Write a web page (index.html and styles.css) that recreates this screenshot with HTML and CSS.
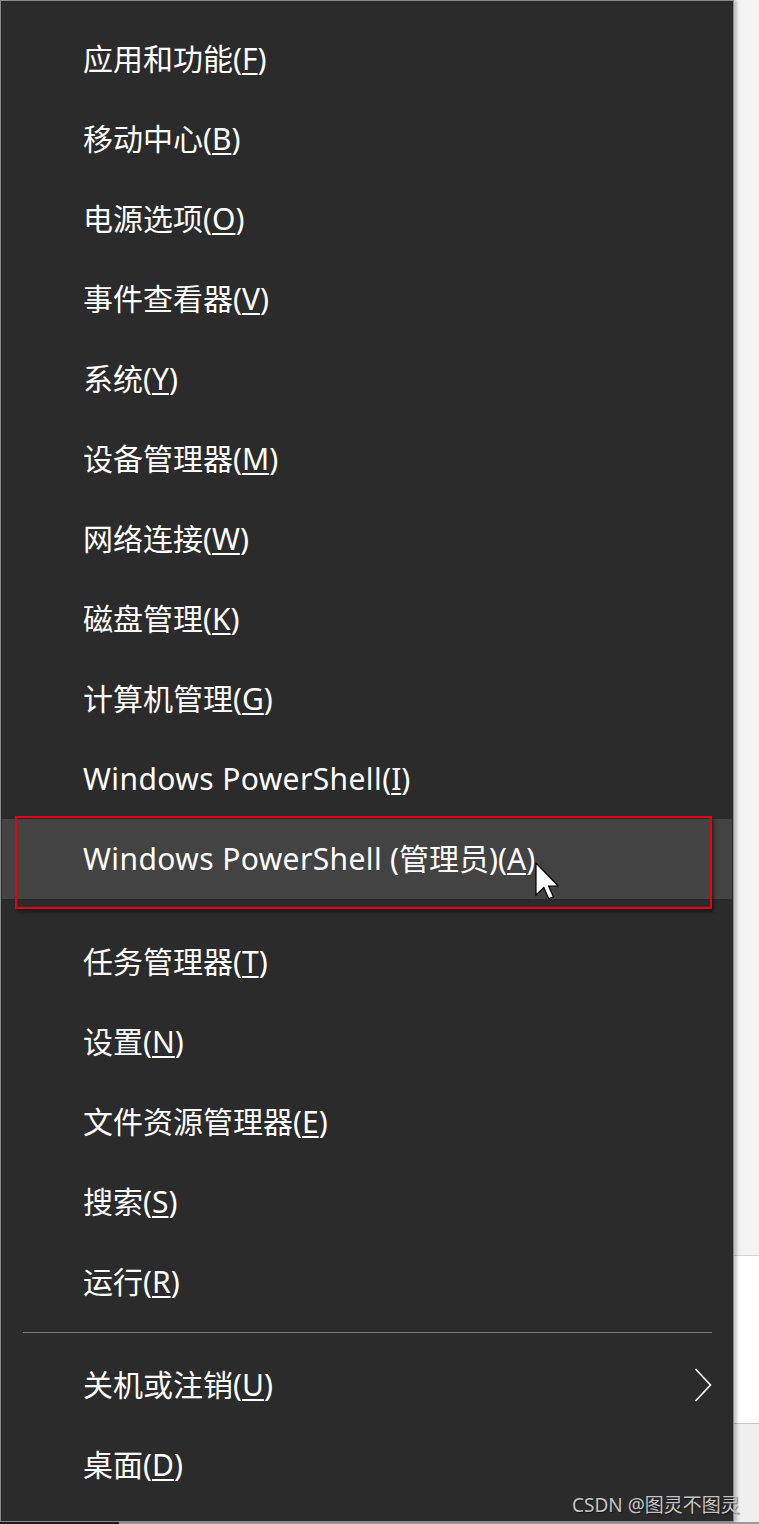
FILE: index.html
```html
<!DOCTYPE html>
<html lang="zh-CN">
<head>
<meta charset="utf-8">
<title>Win+X 菜单</title>
<link rel="stylesheet" href="styles.css">
</head>
<body>
<div class="desk">
  <div class="menu">
    <div class="item"><span class="label">应用和功能(<u>F</u>)</span></div>
    <div class="item"><span class="label">移动中心(<u>B</u>)</span></div>
    <div class="item"><span class="label">电源选项(<u>O</u>)</span></div>
    <div class="item"><span class="label">事件查看器(<u>V</u>)</span></div>
    <div class="item"><span class="label">系统(<u>Y</u>)</span></div>
    <div class="item"><span class="label">设备管理器(<u>M</u>)</span></div>
    <div class="item"><span class="label">网络连接(<u>W</u>)</span></div>
    <div class="item"><span class="label">磁盘管理(<u>K</u>)</span></div>
    <div class="item"><span class="label">计算机管理(<u>G</u>)</span></div>
    <div class="item"><span class="label"><span class="lat">Windows PowerShell</span>(<u>I</u>)</span></div>
    <div class="item hover">
      <span class="label"><span class="lat">Windows PowerShell</span> (管理员)(<u>A</u>)</span>
      <div class="mark"></div>
      <svg class="cursor" width="24" height="38" viewBox="0 0 12 19">
        <path d="M0.5 0.5 L0.5 16.5 L4.4 12.8 L6.9 18.4 L9.2 17.4 L6.8 12 L11.6 12 Z" fill="#fff" stroke="#000" stroke-width="0.6" stroke-linejoin="miter"/>
      </svg>
    </div>
    <div class="gap"></div>
    <div class="item"><span class="label">任务管理器(<u>T</u>)</span></div>
    <div class="item"><span class="label">设置(<u>N</u>)</span></div>
    <div class="item"><span class="label">文件资源管理器(<u>E</u>)</span></div>
    <div class="item"><span class="label">搜索(<u>S</u>)</span></div>
    <div class="item"><span class="label">运行(<u>R</u>)</span></div>
    <div class="sep"></div>
    <div class="item">
      <span class="label">关机或注销(<u>U</u>)</span>
      <svg class="chev" width="18" height="34" viewBox="0 0 18 34">
        <polyline points="1.5,1 16.5,17 1.5,33" fill="none" stroke="#fff" stroke-width="1.6"/>
      </svg>
    </div>
    <div class="item"><span class="label">桌面(<u>D</u>)</span></div>
  </div>
  <div class="side">
    <div class="side-top"></div>
    <div class="side-panel"></div>
    <div class="side-bottom"></div>
  </div>
</div>
<div class="strip">
  <div class="strip-dark"></div>
  <div class="strip-light"></div>
</div>
<div class="watermark">CSDN @图灵不图灵</div>
</body>
</html>
```
FILE: styles.css
```css
* { box-sizing: border-box; }

html, body {
  margin: 0;
  padding: 0;
}

body {
  width: 759px;
  height: 1524px;
  background: #f3f3f3;
  position: relative;
  overflow: hidden;
  font-family: "Noto Sans", "Noto Sans CJK SC", sans-serif;
}

.desk {
  display: flex;
  height: 1522px;
}

.menu {
  width: 734px;
  height: 1522px;
  flex: none;
  background: #2b2b2b;
  border: 1px solid #8a8a8a;
  padding-top: 18px;
  display: flex;
  flex-direction: column;
  position: relative;
  z-index: 1;
  box-shadow: 3px 0 3px rgba(0, 0, 0, 0.22);
}

.item {
  height: 80px;
  flex: none;
  display: flex;
  align-items: center;
  justify-content: space-between;
  padding: 0 21px 0 82px;
  color: #ffffff;
  font-size: 30px;
  line-height: 40px;
  white-space: nowrap;
}

.label {
  display: block;
}

.lat {
  letter-spacing: 0.4px;
}

.item u {
  text-decoration: underline;
  text-decoration-thickness: 1.5px;
  text-underline-offset: 3px;
}

.item.hover {
  position: relative;
  margin: 0 1px;
  padding-left: 81px;
  background: #434343;
}

.mark {
  position: absolute;
  left: 13px;
  top: -3px;
  width: 697px;
  height: 93px;
  border: 2px solid #e60012;
  box-shadow: 2px 3px 3px rgba(0, 0, 0, 0.45);
  pointer-events: none;
}

.cursor {
  position: absolute;
  left: 533px;
  top: 43px;
}

.chev {
  display: block;
  flex: none;
}

.gap {
  height: 23px;
  flex: none;
}

.sep {
  height: 23px;
  flex: none;
  padding: 10px 21px 0 22px;
}

.sep::before {
  content: "";
  display: block;
  height: 1px;
  background: #7b7b7b;
}

.side {
  flex: 1;
  display: flex;
  flex-direction: column;
}

.side-top {
  height: 1256px;
  background: #f3f3f3;
  border-bottom: 1px solid #d2d2d2;
}

.side-panel {
  height: 168px;
  background: #ffffff;
  border-bottom: 1px solid #c8c8c8;
}

.side-bottom {
  flex: 1;
  background: #efefef;
}

.strip {
  display: flex;
  height: 2px;
}

.strip-dark {
  width: 119px;
  background: #1f1f1f;
}

.strip-light {
  flex: 1;
  background: #9a9a9a;
}

.watermark {
  position: absolute;
  left: 572px;
  top: 1492px;
  z-index: 2;
  font-size: 19px;
  line-height: 26px;
  color: #c4c4c4;
  text-shadow: 1px 1px 1px rgba(0, 0, 0, 0.45);
  white-space: nowrap;
}
```
